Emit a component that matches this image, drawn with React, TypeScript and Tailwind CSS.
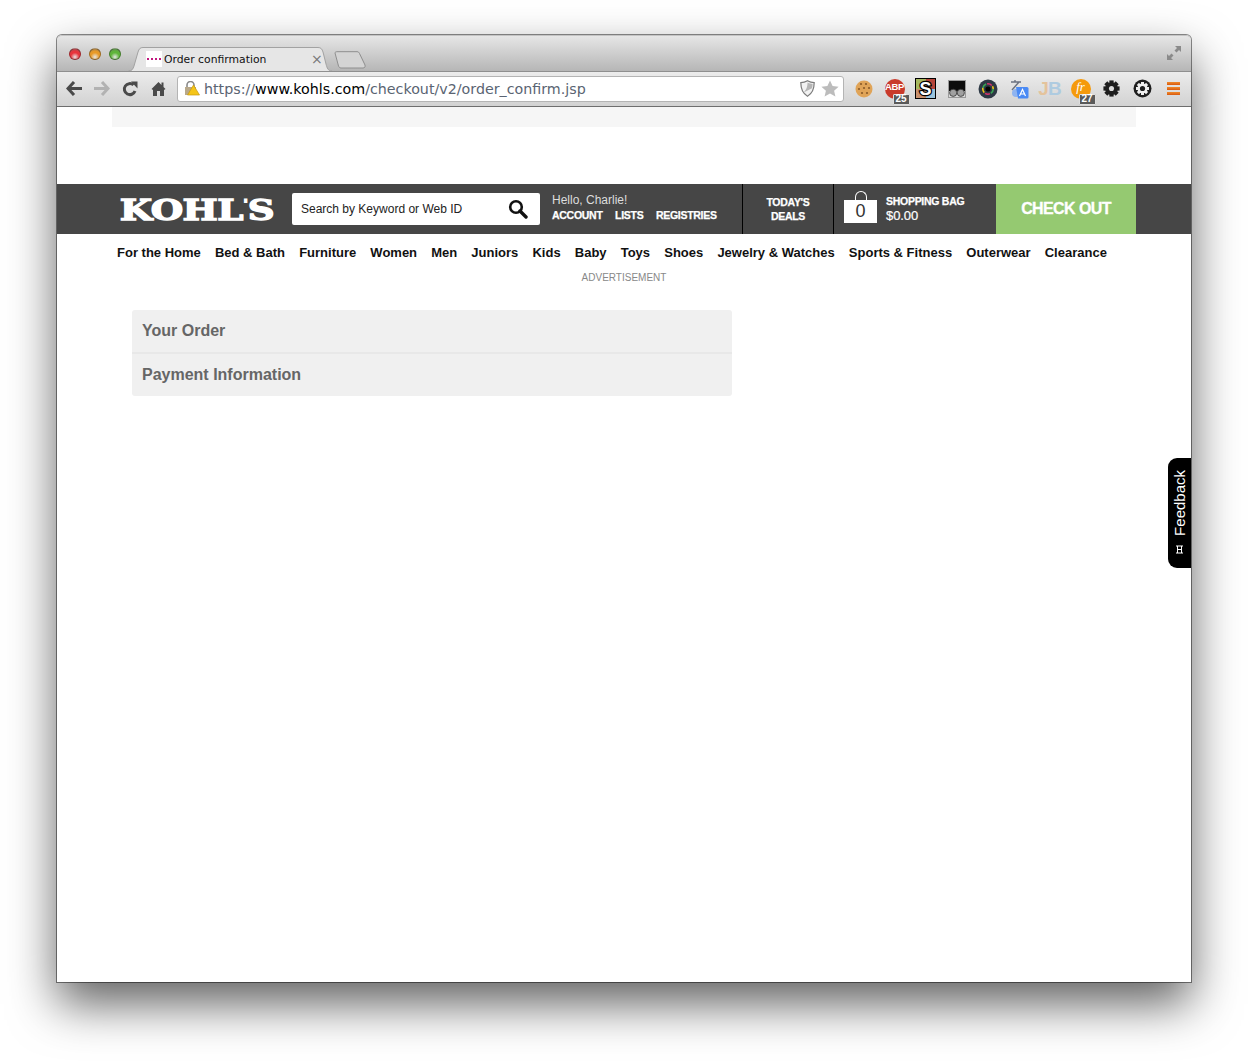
import React from "react";

const ui = "font-['DejaVu_Sans',sans-serif]";

function Light({ c }: { c: string }) {
  return (
    <div
      className="h-[12px] w-[12px] rounded-full border border-black/30"
      style={{ background: `radial-gradient(circle at 50% 80%, #ffffff88, ${c} 45%, ${c} 60%, #00000088 115%)` }}
    />
  );
}

function TabShape() {
  return (
    <svg className="absolute inset-0" width="204" height="24" viewBox="0 0 204 24">
      <path d="M0.5 24 C4 24 5 22 6 19 L10 5 C11 2 12 0.5 15 0.5 L190 0.5 C193 0.5 194 2 195 5 L198 17 C199 21 200 24 204 24" fill="#e6e6e6" stroke="#a2a2a2" />
    </svg>
  );
}

const Back = ({ c }: { c: string }) => (
  <svg width="17" height="15" viewBox="0 0 17 15"><path d="M8 1 L2 7.5 L8 14 M2.5 7.5 H16" fill="none" stroke={c} strokeWidth="3" /></svg>
);
const Reload = () => (
  <svg width="16" height="16" viewBox="0 0 16 16"><path d="M13 10 A5.5 5.5 0 1 1 11.5 4" fill="none" stroke="#4a4a4a" strokeWidth="3" /><path d="M9 0.5 H15.5 V7.5 Z" fill="#4a4a4a" /></svg>
);
const Home = () => (
  <svg width="15" height="15" viewBox="0 0 15 15"><path d="M0.5 8 L7.5 1 L10.5 4 V1.5 H12.5 V6 L14.5 8 L13 9 V15 H9 V10 H6 V15 H2 V9 Z" fill="#4a4a4a" /></svg>
);
const Lock = () => (
  <svg width="16" height="15" viewBox="0 0 16 15">
    <path d="M3 6 V4 A3.5 3.5 0 0 1 10 4 V6" fill="none" stroke="#8a8a8a" strokeWidth="1.6" />
    <rect x="1" y="6" width="11" height="8" fill="#b9a98a" />
    <path d="M9.5 4 L15.5 14 H3.5 Z" fill="#f5c518" stroke="#c79a10" strokeWidth="0.7" strokeLinejoin="round" />
  </svg>
);
const Shield = () => (
  <svg width="15" height="17" viewBox="0 0 15 17">
    <path d="M7.5 0.8 C10 2.2 12 2.6 14.2 2.6 C14.2 9 12.5 13.5 7.5 16.2 C2.5 13.5 0.8 9 0.8 2.6 C3 2.6 5 2.2 7.5 0.8 Z" fill="#f2f2f2" stroke="#7b7b7b" strokeWidth="1.2" />
    <path d="M7.5 2.5 C9.5 3.5 11 3.8 12.6 3.9 C12.6 5.5 12.4 7 12 8.2 L3.6 12.6 C7 9 7.5 6 7.5 2.5 Z" fill="#b5b5b5" />
  </svg>
);
const Star = () => (
  <svg width="18" height="17" viewBox="0 0 18 17"><path d="M9 0.5 L11.6 6 L17.6 6.7 L13.1 10.7 L14.4 16.6 L9 13.6 L3.6 16.6 L4.9 10.7 L0.4 6.7 L6.4 6 Z" fill="#bcbcbc" /></svg>
);
const Badge = ({ n }: { n: string }) => (
  <span className="absolute bottom-[-6px] right-[-5px] flex h-[11px] w-[17px] items-center justify-center rounded-[1px] border border-[#ddd] bg-[#5a5a5a] text-[10px] font-bold leading-none text-white font-['Liberation_Sans',sans-serif]">{n}</span>
);

const Cookie = () => (
  <svg width="18" height="18" viewBox="0 0 18 18">
    <circle cx="9" cy="9" r="8.5" fill="#e0a458" />
    {[[6, 4], [11, 4], [4, 9], [9, 8], [14, 8], [7, 13], [12, 13]].map(([x, y]) => (
      <circle key={x * 100 + y} cx={x} cy={y} r="1.1" fill="#8a5a28" />
    ))}
  </svg>
);
const Abp = () => (
  <div className="relative flex h-[20px] w-[20px] items-start justify-center rounded-full bg-[#c93a2b]">
    <span className="text-[9.5px] font-bold leading-[15px] tracking-[-0.4px] text-white font-['Liberation_Sans',sans-serif]">ABP</span>
    <Badge n="25" />
  </div>
);
const Sq = () => (
  <div className="relative grid h-[19px] w-[19px] grid-cols-2 grid-rows-2 outline outline-1 outline-black">
    <div className="bg-[#a6b85f]" />
    <div className="bg-[#b8453a]" />
    <div className="bg-[#c8906e]" />
    <div className="bg-[#9cc4dc]" />
    <span className="absolute inset-0 flex items-center justify-center text-[18px] font-black leading-none text-white [paint-order:stroke_fill] [-webkit-text-stroke:2.5px_black] font-['Liberation_Sans',sans-serif]">S</span>
  </div>
);
const Masks = () => (
  <svg width="18" height="18" viewBox="0 0 18 18">
    <rect x="0.5" y="0.5" width="17" height="17" fill="#d8d8d8" stroke="#9a9a9a" />
    <rect x="1" y="1" width="16" height="10" fill="#0c0c0c" />
    <circle cx="5.2" cy="12.8" r="3.6" fill="#a0a0a0" stroke="#333" strokeWidth="0.8" />
    <circle cx="12.8" cy="12.8" r="3.6" fill="#a0a0a0" stroke="#333" strokeWidth="0.8" />
  </svg>
);
const Lens = () => (
  <svg width="20" height="20" viewBox="0 0 20 20">
    <circle cx="10" cy="10" r="9.5" fill="#2e3945" />
    <circle cx="10" cy="10" r="5.2" fill="none" stroke="#3aa655" strokeWidth="1.6" strokeDasharray="5 12" />
    <circle cx="10" cy="10" r="5.2" fill="none" stroke="#d6336c" strokeWidth="1.6" strokeDasharray="5 12" strokeDashoffset="11" />
    <circle cx="10" cy="10" r="5.2" fill="none" stroke="#f0c419" strokeWidth="1.6" strokeDasharray="5 12" strokeDashoffset="22" />
    <circle cx="10" cy="10" r="2.6" fill="#050505" />
  </svg>
);
const Translate = () => (
  <svg width="20" height="20" viewBox="0 0 20 20">
    <path d="M2 3 H12 M6 1 V3 M10 3 L3 11" fill="none" stroke="#6b7280" strokeWidth="1.4" />
    <circle cx="7" cy="14" r="4" fill="#8fb4f0" />
    <path d="M7 8 H18 A1.5 1.5 0 0 1 19.5 9.5 V18 A1.5 1.5 0 0 1 18 19.5 H9 Z" fill="#4a8af4" />
    <path d="M10.5 17 L13.5 10.5 L16.5 17 M11.6 15 H15.4" fill="none" stroke="#fff" strokeWidth="1.2" />
  </svg>
);
const Jb = () => (
  <div className="flex text-[19px] font-bold leading-none tracking-[-1px] font-['Liberation_Sans',sans-serif]">
    <span className="text-[#e4c39c]">J</span>
    <span className="text-[#aecbe0]">B</span>
  </div>
);
const Orange = () => (
  <div className="relative flex h-[20px] w-[20px] items-start justify-center rounded-full bg-[#f59a0c]">
    <span className="text-[13px] italic leading-[15px] text-white font-['Liberation_Serif',serif]">fr</span>
    <Badge n="27" />
  </div>
);
const Cog = ({ size, hole }: { size: number; hole: number }) => (
  <svg width={size} height={size} viewBox="0 0 20 20">
    <g fill="#1e1e1e">
      {[0, 45, 90, 135].map((a) => (
        <rect key={a} x="7.5" y="0.5" width="5" height="19" transform={`rotate(${a} 10 10)`} />
      ))}
      <circle cx="10" cy="10" r="7.5" />
    </g>
    <circle cx="10" cy="10" r={hole} fill="#dcdcdc" />
  </svg>
);
const Ring = () => (
  <svg width="19" height="19" viewBox="0 0 19 19">
    <circle cx="9.5" cy="9.5" r="9" fill="#1e1e1e" />
    <g fill="#f0f0f0">
      {[0, 45, 90, 135].map((a) => (
        <rect key={a} x="8" y="3" width="3" height="13" transform={`rotate(${a} 9.5 9.5)`} />
      ))}
      <circle cx="9.5" cy="9.5" r="5" />
    </g>
    <circle cx="9.5" cy="9.5" r="2.6" fill="#1e1e1e" />
  </svg>
);
const Bar = () => <div className="h-[3px] w-[13px] bg-gradient-to-b from-[#f08a2a] to-[#d8580f]" />;
const Menu = () => (
  <div className="flex flex-col gap-[2px]">
    <Bar />
    <Bar />
    <Bar />
  </div>
);

const exts = [<Cookie />, <Abp />, <Sq />, <Masks />, <Lens />, <Translate />, <Jb />, <Orange />, <Cog size={17} hole={3} />, <Ring />, <Menu />];

const nav = ["For the Home", "Bed & Bath", "Furniture", "Women", "Men", "Juniors", "Kids", "Baby", "Toys", "Shoes", "Jewelry & Watches", "Sports & Fitness", "Outerwear", "Clearance"];

const small = "text-[10.5px] font-bold leading-[14px] tracking-[-0.28px] [-webkit-text-stroke:0.25px_white]";

export default function App() {
  return (
    <div className="h-[1061px] w-[1248px] overflow-hidden bg-white pl-[57px] pt-[35px] font-['Liberation_Sans',sans-serif]">
      <div className="relative flex h-[947px] w-[1134px] flex-col rounded-t-[5px] bg-white shadow-[0_0_0_1px_rgba(0,0,0,0.45),0_22px_48px_rgba(0,0,0,0.62)]">
        {/* title bar */}
        <div className="flex h-[36px] items-end rounded-t-[5px] border-t border-[#c4c4c4] bg-gradient-to-b from-[#e6e6e6] to-[#b6b6b6]">
          <div className="flex h-full items-start gap-[8px] pl-[12px] pt-[12px]">
            <Light c="#e8343c" />
            <Light c="#e89a27" />
            <Light c="#5fb53a" />
          </div>
          <div className={`relative ml-[7px] flex h-[24px] w-[204px] items-center pl-[18px] ${ui}`}>
            <TabShape />
            <div className="relative flex h-[16px] w-[16px] items-center justify-center bg-white">
              <div className="h-[2px] w-[14px] border-t-2 border-dotted border-[#c2187f]" />
            </div>
            <span className="relative ml-[2px] mt-[2px] text-[10.8px] text-[#111]">Order confirmation</span>
            <span className="absolute left-[183px] top-[3px] text-[14px] leading-[18px] text-[#777]">×</span>
          </div>
          <svg className="mb-[2px] ml-[2px]" width="34" height="18" viewBox="0 0 34 18">
            <path d="M1 2 C1 1 2 0.7 3 0.7 L23 0.7 C24.5 0.7 25 1.5 25.5 2.5 L31 14 C31.5 16 30.5 17 29 17 L7 17 C5.5 17 5 16 4.5 15 Z" fill="#d4d4d4" stroke="#8e8e8e" />
          </svg>
          <div className="ml-auto mr-[9px] self-start pt-[9px]">
            <svg width="16" height="16" viewBox="0 0 16 16">
              <path d="M9 1 H15 V7 L13 5 L10.5 7.5 L8.5 5.5 L11 3 Z" fill="#8a8a8a" />
              <path d="M7 15 H1 V9 L3 11 L5.5 8.5 L7.5 10.5 L5 13 Z" fill="#8a8a8a" />
            </svg>
          </div>
        </div>
        {/* toolbar */}
        <div className="flex h-[36px] items-center border-t border-[#8f8f8f] border-b border-b-[#6e6e6e] bg-gradient-to-b from-[#ececec] to-[#d2d2d2] pb-[1px]">
          <div className="flex w-[120px] shrink-0 pl-[3px]">
            <div className="flex w-[28px] justify-center"><Back c="#4a4a4a" /></div>
            <div className="flex w-[28px] justify-center scale-x-[-1]"><Back c="#b2b2b2" /></div>
            <div className="flex w-[28px] justify-center"><Reload /></div>
            <div className="flex w-[28px] justify-center"><Home /></div>
          </div>
          <div className={`flex h-[26px] w-[667px] shrink-0 items-center rounded-[3px] border border-[#b4b4b4] bg-white pl-[6px] pr-[4px] text-[14.25px] text-[#5a6472] ${ui}`}>
            <Lock />
            <span className="ml-[4px] mt-[2px] whitespace-nowrap">
              https://<span className="text-black">www.kohls.com</span>/checkout/v2/order_confirm.jsp
            </span>
            <div className="ml-auto flex items-center gap-[6px]">
              <Shield />
              <Star />
            </div>
          </div>
          <div className="ml-[4px] flex">
            {exts.map((e, i) => (
              <div key={i} className="flex h-[22px] w-[31px] items-center justify-center">{e}</div>
            ))}
          </div>
        </div>
        {/* page */}
        <div className="mx-[55px] h-[20px] bg-[#f6f6f6]" />
        <div className="mt-[57px] flex h-[50px] items-stretch bg-[#464646] text-white">
          <div className="ml-[63px] flex w-[153px] items-center justify-center pt-[3px]">
            <div className="flex origin-center scale-x-[1.33] items-start whitespace-nowrap text-[28px] font-bold leading-none tracking-[-0.4px] [-webkit-text-stroke:1.3px_white] font-['DejaVu_Serif',serif]">
              <span>KOHL</span>
              <span className="mt-[1px] text-[13px] [-webkit-text-stroke:1px_white]">'</span>
              <span>S</span>
            </div>
          </div>
          <div className="ml-[19px] mt-[9px] flex h-[32px] w-[248px] items-center justify-between rounded-[2px] bg-white pl-[9px] pr-[12px] text-[12px] text-[#222]">
            <span>Search by Keyword or Web ID</span>
            <svg width="20" height="20" viewBox="0 0 20 20">
              <circle cx="8" cy="8" r="5.8" fill="none" stroke="#111" strokeWidth="2.6" />
              <path d="M12 12 L18 18" stroke="#111" strokeWidth="3.4" strokeLinecap="round" />
            </svg>
          </div>
          <div className="ml-[12px] flex w-[190px] flex-col pt-[8px]">
            <span className="text-[12px] leading-[16px] text-[#ddd]">Hello, Charlie!</span>
            <div className={`flex gap-[12.5px] ${small}`}>
              <span>ACCOUNT</span>
              <span>LISTS</span>
              <span>REGISTRIES</span>
            </div>
          </div>
          <div className={`flex w-[91px] flex-col items-center justify-center border-l border-black ${small}`}>
            <span>TODAY'S</span>
            <span>DEALS</span>
          </div>
          <div className="flex w-[163px] items-center border-l border-black pl-[10px]">
            <div className="relative mt-[4px] flex h-[23px] w-[33px] items-center justify-center bg-white text-[18px] leading-none text-[#333]">
              0
              <div className="absolute left-[10.5px] top-[-9px] h-[9px] w-[12px] rounded-t-[6px] border border-b-0 border-white" />
            </div>
            <div className="ml-[9px] mt-[-2px] flex flex-col">
              <span className={small}>SHOPPING BAG</span>
              <span className="text-[13px] leading-[15px] tracking-[-0.1px] [-webkit-text-stroke:0.2px_white]">$0.00</span>
            </div>
          </div>
          <div className="flex w-[140px] items-center justify-center bg-[#95c971] text-[16px] font-bold tracking-[-0.6px] [-webkit-text-stroke:0.3px_white]">CHECK OUT</div>
        </div>
        <div className="flex h-[37px] gap-[14.15px] pl-[60px] pt-[11px] text-[13px] font-bold leading-[15px] text-[#111]">
          {nav.map((n) => (
            <span key={n} className="whitespace-nowrap">{n}</span>
          ))}
        </div>
        <div className="text-center text-[10px] leading-[13px] text-[#888]">ADVERTISEMENT</div>
        <div className="ml-[75px] mt-[26px] w-[600px] rounded-[3px] bg-[#f0f0f0] text-[16px] font-bold text-[#666]">
          <div className="flex h-[42px] items-center pl-[10px]">Your Order</div>
          <div className="h-[2px] bg-[#e8e8e8]" />
          <div className="flex h-[42px] items-center pl-[10px]">Payment Information</div>
        </div>
        {/* feedback tab */}
        <div className="absolute right-0 top-[423px] flex h-[110px] w-[23px] flex-col items-center rounded-l-[9px] bg-black pt-[12px] text-white">
          <span className="rotate-180 text-[15px] leading-[23px] [writing-mode:vertical-rl]">Feedback</span>
          <svg className="mt-[9px]" width="9" height="9" viewBox="0 0 9 9">
            <path d="M1 1 H8 M1 8 H8 M2.5 1 V8 M6.5 1 V8 M2.5 4.5 H6.5" fill="none" stroke="#fff" strokeWidth="1" />
          </svg>
        </div>
      </div>
    </div>
  );
}
